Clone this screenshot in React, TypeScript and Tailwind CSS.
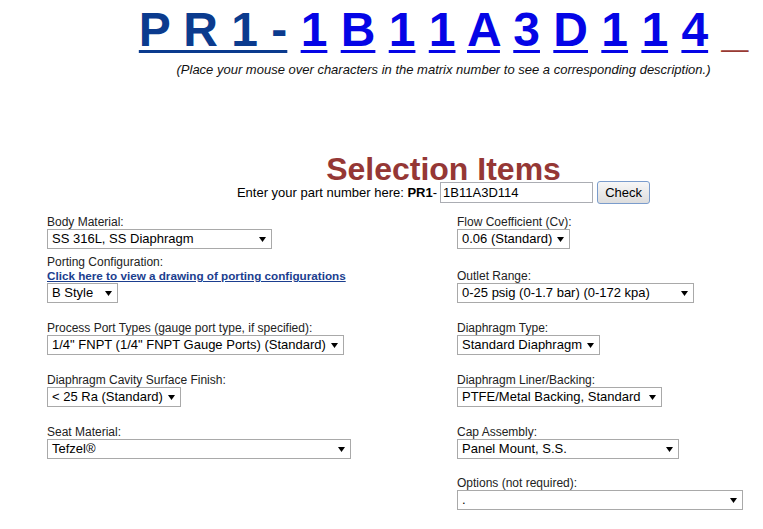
import React from "react";

const chars = ["1", "B", "1", "1", "A", "3", "D", "1", "1", "4"];

function Arrow() {
  return (
    <svg width="7" height="5" viewBox="0 0 7 5" className="shrink-0">
      <polygon points="0,0 7,0 3.5,5" fill="#000" />
    </svg>
  );
}

function Sel({ text, w }: { text: string; w: string }) {
  return (
    <div
      className={`flex items-center h-[20px] border border-[#a9a9a9] bg-white pl-[4px] pr-[5px] text-[13px] leading-[16px] text-black whitespace-nowrap ${w}`}
    >
      <span className="flex-1">{text}</span>
      <span className="ml-[4px] flex items-center">
        <Arrow />
      </span>
    </div>
  );
}

function Label({ children }: { children: React.ReactNode }) {
  return <div className="text-[12px] leading-[14px] text-[#222] whitespace-nowrap">{children}</div>;
}

export default function App() {
  return (
    <div className="w-[763px] h-[529px] overflow-hidden bg-white font-['Liberation_Sans',Arial,sans-serif] text-black">
      <div className="pl-[124px] pt-[2px] text-center text-[48px] font-bold leading-[55px] whitespace-nowrap">
        <span className="text-[#0b3b8e] underline decoration-3 underline-offset-4">P R 1 -</span>
        {chars.map((c, i) => (
          <React.Fragment key={i}>
            {" "}
            <a className="text-[#0505e6] underline decoration-3 underline-offset-4 cursor-pointer">{c}</a>
          </React.Fragment>
        ))}{" "}
        <span className="text-[#983a33]">_</span>
      </div>
      <p className="pl-[124px] mt-[5px] text-center italic text-[13px] leading-[15px] text-[#111] whitespace-nowrap">
        (Place your mouse over characters in the matrix number to see a corresponding description.)
      </p>
      <div className="pl-[124px] mt-[80px] text-center text-[32px] font-bold leading-[24px] text-[#953735]">
        Selection Items
      </div>
      <div className="pl-[124px] flex justify-center items-center h-[23px] text-[13px]">
        <span className="whitespace-nowrap">
          Enter your part number here: <b>PR1</b>-
        </span>
        <input
          defaultValue="1B11A3D114"
          className="ml-[3px] w-[153px] h-[21px] border border-[#abadb3] px-[2px] text-[13px] outline-none bg-white"
        />
        <button className="ml-[4px] w-[53px] h-[23px] rounded-[3px] border border-[#7a9ccc] bg-linear-to-b from-[#f7f7f7] to-[#dddddd] text-[13px] text-black">
          Check
        </button>
      </div>

      <div className="flex flex-col">
        <div className="mt-[11px] grid grid-cols-[410px_1fr] items-end pl-[47px]">
          <div>
            <Label>Body Material:</Label>
            <Sel text="SS 316L, SS Diaphragm" w="w-[225px]" />
          </div>
          <div>
            <Label>Flow Coefficient (Cv):</Label>
            <Sel text="0.06 (Standard)" w="w-[113px]" />
          </div>
        </div>
        <div className="mt-[6px] grid grid-cols-[410px_1fr] items-end pl-[47px]">
          <div>
            <Label>Porting Configuration:</Label>
            <div className="text-[11.7px] leading-[14px] font-bold text-[#1b3e8f] underline whitespace-nowrap cursor-pointer">
              Click here to view a drawing of porting configurations
            </div>
            <Sel text="B Style" w="w-[71px]" />
          </div>
          <div>
            <Label>Outlet Range:</Label>
            <Sel text="0-25 psig (0-1.7 bar) (0-172 kpa)" w="w-[237px]" />
          </div>
        </div>
        <div className="mt-[18px] grid grid-cols-[410px_1fr] items-end pl-[47px]">
          <div>
            <Label>Process Port Types (gauge port type, if specified):</Label>
            <Sel text={'1/4" FNPT (1/4" FNPT Gauge Ports) (Standard)'} w="w-[297px]" />
          </div>
          <div>
            <Label>Diaphragm Type:</Label>
            <Sel text="Standard Diaphragm" w="w-[143px]" />
          </div>
        </div>
        <div className="mt-[18px] grid grid-cols-[410px_1fr] items-end pl-[47px]">
          <div>
            <Label>Diaphragm Cavity Surface Finish:</Label>
            <Sel text="< 25 Ra (Standard)" w="w-[134px]" />
          </div>
          <div>
            <Label>Diaphragm Liner/Backing:</Label>
            <Sel text="PTFE/Metal Backing, Standard" w="w-[205px]" />
          </div>
        </div>
        <div className="mt-[18px] grid grid-cols-[410px_1fr] items-end pl-[47px]">
          <div>
            <Label>Seat Material:</Label>
            <Sel text="Tefzel®" w="w-[304px]" />
          </div>
          <div>
            <Label>Cap Assembly:</Label>
            <Sel text="Panel Mount, S.S." w="w-[222px]" />
          </div>
        </div>
        <div className="mt-[17px] grid grid-cols-[410px_1fr] items-end pl-[47px]">
          <div></div>
          <div>
            <Label>Options (not required):</Label>
            <Sel text="." w="w-[286px]" />
          </div>
        </div>
      </div>
    </div>
  );
}
